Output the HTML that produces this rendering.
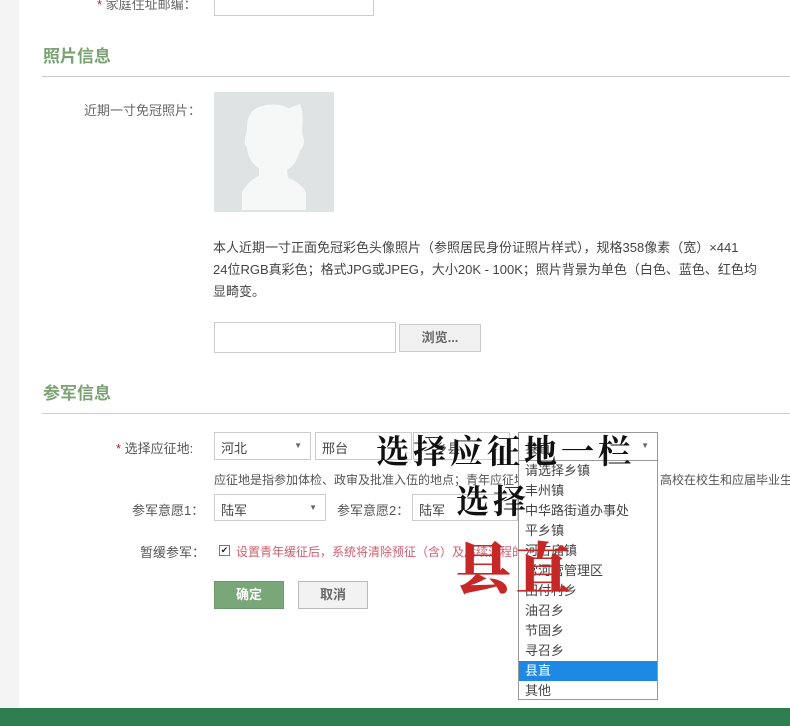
<!DOCTYPE html>
<html><head><meta charset="utf-8"><style>
*{margin:0;padding:0;box-sizing:border-box}
body{width:790px;height:726px;overflow:hidden;background:#f4f4f4;font-family:"Liberation Sans","Noto Sans CJK SC",sans-serif;font-size:13px;color:#555;position:relative}
.main{position:absolute;left:19px;top:0;width:771px;height:708px;background:#fff}
.a{position:absolute;white-space:nowrap}
.h{font-size:17px;font-weight:bold;color:#7aa272}
.line{position:absolute;left:42px;right:0;height:1px;background:#ccc}
.box{position:absolute;border:1px solid #ccc;background:#fff}
.sel{position:absolute;border:1px solid #ccc;background:#fff;font-size:13px;color:#444;padding:5px 0 0 6px;height:28px}
.sel i{position:absolute;right:8px;top:8px;font-style:normal;font-size:8px;color:#666}
.big{position:absolute;font-family:"Noto Serif CJK SC",serif;font-weight:bold;font-size:33px;color:#111;white-space:nowrap;letter-spacing:4px}
.dd{position:absolute;left:518px;top:460px;width:140px;height:240px;border:1px solid #999;background:#fff}
.dd div{height:20px;line-height:20px;padding-left:6px;font-size:13px;color:#444}
</style></head><body>
<div class="main"></div>
<div class="a" style="left:97px;top:-6px;color:#666"><span style="color:#b22">*</span> 家庭住址邮编：</div>
<div class="box" style="left:214px;top:-4px;width:160px;height:20px"></div>
<div class="a h" style="left:43px;top:42px">照片信息</div>
<div class="line" style="top:76px"></div>
<div class="a" style="left:84px;top:100px;color:#666">近期一寸免冠照片：</div>
<div style="position:absolute;left:214px;top:92px;width:120px;height:120px;background:#dfe3e3">
<svg width="120" height="120"><path d="M28 118 L28 100 Q35 88 45 84 L45 76 Q34 70 33 55 Q30 54 31 46 L33 38 Q32 18 48 14 Q62 10 75 16 L86 12 Q90 20 88 40 L90 48 Q90 56 86 58 Q83 72 73 78 L74 86 Q86 90 92 100 L92 118 Z" fill="#f6f8f8"/></svg></div>
<div class="a" style="left:213px;top:237px;color:#444;line-height:22px">本人近期一寸正面免冠彩色头像照片（参照居民身份证照片样式），规格358像素（宽）×441<br>24位RGB真彩色；格式JPG或JPEG，大小20K - 100K；照片背景为单色（白色、蓝色、红色均<br>显畸变。</div>
<div class="box" style="left:214px;top:322px;width:182px;height:31px"></div>
<div class="box" style="left:399px;top:324px;width:82px;height:28px;background:#f0f0f0;color:#666;text-align:center;line-height:26px;font-weight:bold">浏览...</div>
<div class="a h" style="left:43px;top:379px">参军信息</div>
<div class="line" style="top:413px"></div>
<div class="a" style="left:116px;top:438px;color:#555"><span style="color:#b22">*</span> 选择应征地:</div>
<div class="sel" style="left:214px;top:432px;width:97px">河北<i>▼</i></div>
<div class="sel" style="left:315px;top:432px;width:97px">邢台</div>
<div class="sel" style="left:413px;top:432px;width:97px">&nbsp;&nbsp;&nbsp;&nbsp;乡县</div>
<div class="sel" style="left:518px;top:432px;width:140px;height:29px;border-color:#999">县直<i>▼</i></div>
<div class="a" style="left:214px;top:471px;font-size:12px;color:#555">应征地是指参加体检、政审及批准入伍的地点；青年应征地</div>
<div class="a" style="left:660px;top:471px;font-size:12px;color:#555">高校在校生和应届毕业生</div>
<div class="a" style="left:132px;top:500px;color:#555">参军意愿1：</div>
<div class="sel" style="left:214px;top:494px;width:112px;height:27px">陆军<i>▼</i></div>
<div class="a" style="left:337px;top:500px;color:#555">参军意愿2：</div>
<div class="sel" style="left:412px;top:494px;width:106px;height:27px">陆军</div>
<div class="a" style="left:140px;top:542px;color:#555">暂缓参军：</div>
<div style="position:absolute;left:219px;top:545px;width:11px;height:11px;border:1px solid #777;font-size:9px;line-height:9px;text-align:center;color:#222">✔</div>
<div class="a" style="left:236px;top:543px;font-size:12px;color:#d06070">设置青年缓征后，系统将清除预征（含）及后续流程的</div>
<div style="position:absolute;left:214px;top:581px;width:70px;height:28px;background:#7aa77a;border:1px solid #6a9a6a;color:#fff;font-weight:bold;text-align:center;line-height:26px">确定</div>
<div style="position:absolute;left:298px;top:581px;width:70px;height:28px;background:#f2f2f2;border:1px solid #bbb;color:#666;font-weight:bold;text-align:center;line-height:26px">取消</div>
<div class="dd">
<div>请选择乡镇</div><div>丰州镇</div><div>中华路街道办事处</div><div>平乡镇</div><div>河古庙镇</div><div>常河营管理区</div><div>田付村乡</div><div>油召乡</div><div>节固乡</div><div>寻召乡</div><div style="background:#1e88e5;color:#fff">县直</div><div>其他</div>
</div>
<div class="big" style="left:376px;top:426px">选择应征地一栏</div>
<div class="big" style="left:456px;top:476px">选择</div>
<div class="big" style="left:455px;top:526px;font-size:56px;color:#c62828;letter-spacing:4px;font-weight:900">县直</div>
<div style="position:absolute;left:0;top:708px;width:790px;height:18px;background:#2e7d4f"></div>
</body></html>
